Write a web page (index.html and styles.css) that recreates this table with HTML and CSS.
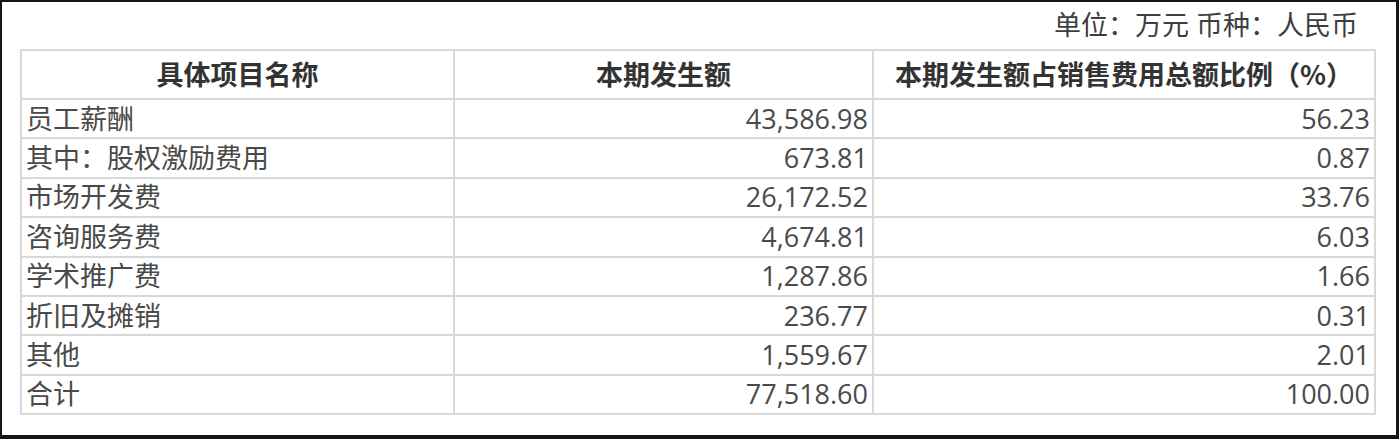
FILE: index.html
```html
<!DOCTYPE html>
<html lang="zh-CN">
<head>
<meta charset="utf-8">
<title>销售费用构成</title>
<link rel="stylesheet" href="styles.css">
</head>
<body>
<div class="frame">
  <div class="unit">单位：万元 币种：人民币</div>
  <table class="sheet">
    <colgroup>
      <col class="c1">
      <col class="c2">
      <col class="c3">
    </colgroup>
    <thead>
      <tr>
        <th>具体项目名称</th>
        <th>本期发生额</th>
        <th>本期发生额占销售费用总额比例<span class="pct">（%）</span></th>
      </tr>
    </thead>
    <tbody>
      <tr><td>员工薪酬</td><td class="num">43,586.98</td><td class="num">56.23</td></tr>
      <tr><td>其中：股权激励费用</td><td class="num">673.81</td><td class="num">0.87</td></tr>
      <tr><td>市场开发费</td><td class="num">26,172.52</td><td class="num">33.76</td></tr>
      <tr><td>咨询服务费</td><td class="num">4,674.81</td><td class="num">6.03</td></tr>
      <tr><td>学术推广费</td><td class="num">1,287.86</td><td class="num">1.66</td></tr>
      <tr><td>折旧及摊销</td><td class="num">236.77</td><td class="num">0.31</td></tr>
      <tr><td>其他</td><td class="num">1,559.67</td><td class="num">2.01</td></tr>
      <tr><td>合计</td><td class="num">77,518.60</td><td class="num">100.00</td></tr>
    </tbody>
  </table>
</div>
</body>
</html>
```

FILE: styles.css
```css
html, body {
  margin: 0;
  padding: 0;
  background: #ffffff;
}

.frame {
  box-sizing: border-box;
  width: 1399px;
  height: 439px;
  border-style: solid;
  border-color: #161616;
  border-width: 2px 3px 4px 2px;
  padding: 0 22px 0 18px;
  font-family: "Open Sans", "Noto Sans CJK SC", sans-serif;
  color: #444444;
}

.unit {
  height: 47px;
  box-sizing: border-box;
  padding: 6px 16px 0 0;
  text-align: right;
  font-size: 27px;
  line-height: 34px;
  color: #3e3e3e;
}

.sheet {
  width: 1354px;
  table-layout: fixed;
  border-collapse: separate;
  border-spacing: 0;
  border-top: 2px solid #d8d8d8;
  border-left: 2px solid #d8d8d8;
  font-size: 27px;
}

.c1 { width: 433px; }
.c2 { width: 419px; }
.c3 { width: 502px; }

.sheet th,
.sheet td {
  border-right: 2px solid #d8d8d8;
  border-bottom: 2px solid #d8d8d8;
  padding: 0 4px 0 4px;
  vertical-align: middle;
  white-space: nowrap;
  line-height: 34px;
}

.sheet th {
  height: 47px;
  box-sizing: border-box;
  font-weight: 700;
  color: #333333;
  text-align: center;
}

.sheet th .pct {
  font-family: "Noto Sans CJK SC", sans-serif;
  font-weight: 700;
}

.sheet thead tr {
  height: 49px;
}

.sheet tbody tr {
  height: 39.4px;
}

.sheet td {
  text-align: left;
  color: #4a4a4a;
}

.sheet td.num {
  text-align: right;
}
```
